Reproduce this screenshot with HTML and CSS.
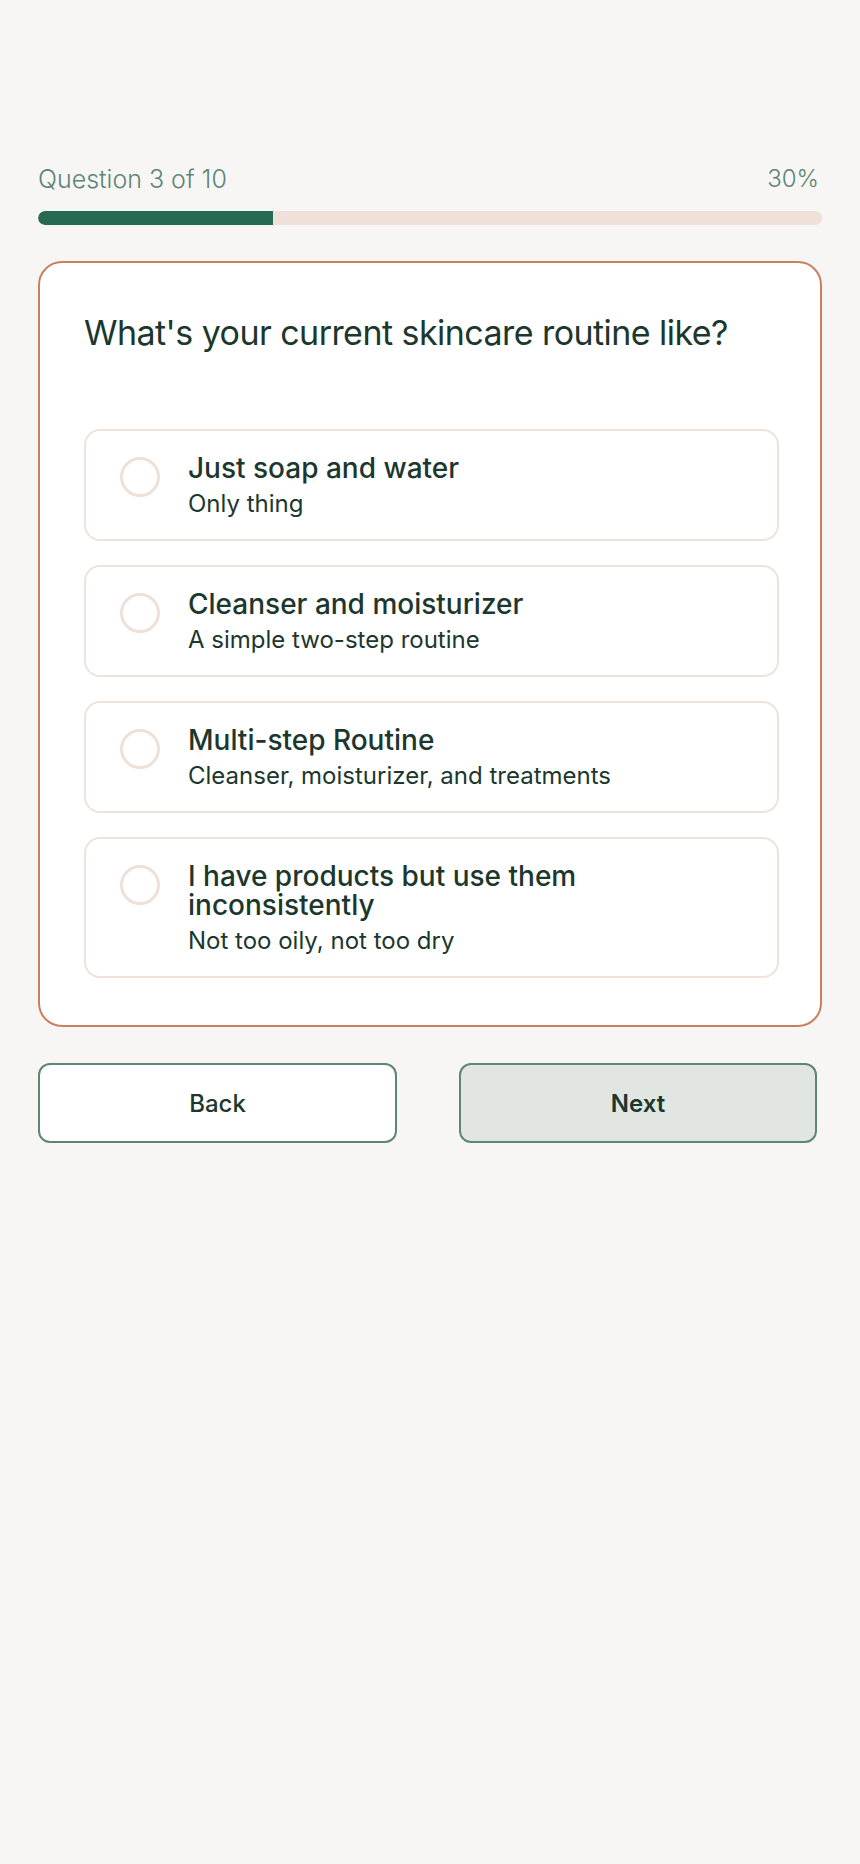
FILE: index.html
```html
<!DOCTYPE html>
<html lang="en">
<head>
<meta charset="utf-8">
<title>Skincare Quiz</title>
<link rel="stylesheet" href="styles.css">
</head>
<body>
<main class="quiz">
  <div class="progress-head">
    <span class="progress-label">Question 3 of 10</span>
    <span class="progress-label">30%</span>
  </div>
  <div class="track"><div class="fill" style="width:30%"></div></div>

  <section class="card">
    <h1 class="question">What's your current skincare routine like?</h1>
    <div class="options">
      <div class="option">
        <span class="radio"></span>
        <div class="option-text">
          <div class="option-title">Just soap and water</div>
          <div class="option-sub">Only thing</div>
        </div>
      </div>
      <div class="option">
        <span class="radio"></span>
        <div class="option-text">
          <div class="option-title">Cleanser and moisturizer</div>
          <div class="option-sub">A simple two-step routine</div>
        </div>
      </div>
      <div class="option">
        <span class="radio"></span>
        <div class="option-text">
          <div class="option-title">Multi-step Routine</div>
          <div class="option-sub">Cleanser, moisturizer, and treatments</div>
        </div>
      </div>
      <div class="option">
        <span class="radio"></span>
        <div class="option-text">
          <div class="option-title">I have products but use them inconsistently</div>
          <div class="option-sub">Not too oily, not too dry</div>
        </div>
      </div>
    </div>
  </section>

  <div class="actions">
    <button class="btn btn-back">Back</button>
    <button class="btn btn-next">Next</button>
  </div>
</main>
</body>
</html>
```

FILE: styles.css
```css
* { box-sizing: border-box; }

html, body {
  margin: 0;
  padding: 0;
  background: #f8f6f4;
}

body {
  font-family: Inter, "Noto Sans", "Liberation Sans", sans-serif;
  color: #1c372d;
  min-height: 1864px;
}

.quiz {
  width: 860px;
  padding: 161px 38px 0 38px;
}

.progress-head {
  display: flex;
  justify-content: space-between;
  align-items: center;
  height: 36px;
  padding-right: 3px;
}

.progress-label {
  font-size: 25px;
  font-weight: 300;
  line-height: 36px;
  color: #5c8574;
}

.progress-label:last-child {
  font-size: 24px;
}

.track {
  margin-top: 14px;
  height: 14px;
  border-radius: 7px;
  background: #efe0d9;
  overflow: hidden;
}

.fill {
  height: 100%;
  background: #276a53;
  border-radius: 7px 0 0 7px;
}

.card {
  margin-top: 36px;
  background: #ffffff;
  border: 2px solid #c8805f;
  border-radius: 24px;
  padding: 48px 41px 47px 44px;
}

.question {
  margin: 0 0 74px 0;
  font-size: 34px;
  font-weight: 400;
  line-height: 44px;
  letter-spacing: -0.55px;
  color: #1c372d;
}

.options {
  display: flex;
  flex-direction: column;
  gap: 24px;
}

.option {
  display: flex;
  align-items: flex-start;
  gap: 28px;
  border: 2px solid #efe2da;
  border-radius: 16px;
  padding: 23px 24px 17px 34px;
  background: #ffffff;
}

.radio {
  flex: none;
  width: 40px;
  height: 40px;
  margin-top: 3px;
  border: 3.5px solid #efe0d8;
  border-radius: 50%;
}

.option-title {
  font-size: 28px;
  font-weight: 500;
  line-height: 29px;
  color: #1c372d;
}

.option-sub {
  margin-top: 3px;
  font-size: 24px;
  font-weight: 400;
  line-height: 36px;
  color: #1c372d;
}

.actions {
  margin-top: 36px;
  display: grid;
  grid-template-columns: 359px 358px;
  column-gap: 62px;
}

.btn {
  height: 80px;
  border: 2px solid #5e8677;
  border-radius: 12px;
  font-family: Inter, "Noto Sans", "Liberation Sans", sans-serif;
  font-size: 24px;
  color: #1c372d;
  cursor: pointer;
}

.btn-back {
  background: #ffffff;
  font-weight: 500;
}

.btn-next {
  background: #e1e6e2;
  font-weight: 600;
}
```
